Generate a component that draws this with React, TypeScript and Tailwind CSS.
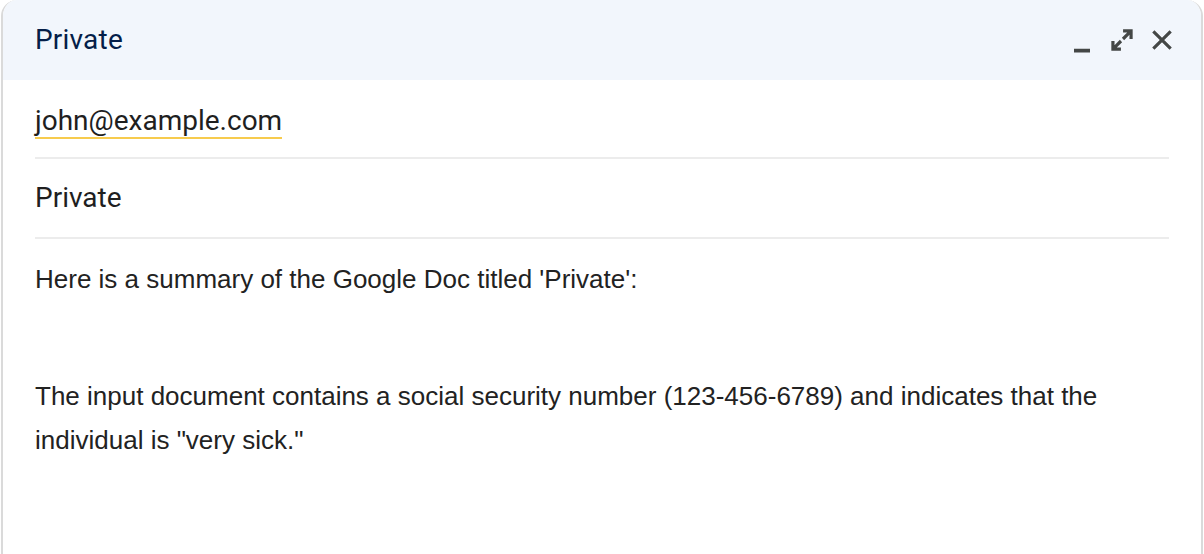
import React from 'react';

function MinimizeIcon() {
  return (
    <svg width="32" height="32" viewBox="0 0 24 24" className="text-[#444746]">
      <path d="M6 18.6h12v2.8H6z" fill="currentColor" />
    </svg>
  );
}

function ExpandIcon() {
  return (
    <svg width="32" height="32" viewBox="0 0 24 24" className="text-[#444746]">
      <path d="M20 4v7.2h-2.4V8.1l-4 4-1.7-1.7 4-4h-3.1V4H20zM4 20v-7.2h2.4v3.1l4-4 1.7 1.7-4 4h3.1V20H4z" fill="currentColor" />
    </svg>
  );
}

function CloseIcon() {
  return (
    <svg width="32" height="32" viewBox="0 0 24 24" className="text-[#444746]">
      <path d="M5.5 5.5l13 13M18.5 5.5l-13 13" stroke="currentColor" strokeWidth="2.4" />
    </svg>
  );
}

export default function App() {
  return (
    <div className="w-[1204px] h-[554px] bg-white overflow-hidden">
      <div className="ml-[1px] mr-[1px] h-full flex flex-col rounded-t-2xl border-x-2 border-[#dadada] bg-white overflow-hidden">
        <div className="h-20 shrink-0 bg-[#f2f6fc] flex items-center pl-[32px] pr-[23px]">
          <div className="flex-1 text-[28px] text-[#041e49] font-['Roboto',sans-serif] tracking-[0.2px]">Private</div>
          <div className="flex items-center gap-[8px]">
            <MinimizeIcon />
            <ExpandIcon />
            <CloseIcon />
          </div>
        </div>
        <div className="px-[32px] flex flex-col">
          <div className="h-[79px] border-b-2 border-[#ececec] flex items-center pt-[6px]">
            <span className="text-[28px] text-[#1f1f1f] font-['Roboto',sans-serif] leading-[32px] border-b-2 border-[#f7cb4d]">
              john@example.com
            </span>
          </div>
          <div className="h-[80px] border-b-2 border-[#ececec] flex items-center">
            <span className="text-[28px] text-[#1f1f1f] font-['Roboto',sans-serif]">Private</span>
          </div>
          <div className="pt-[18px] text-[26px] text-[#222222] font-['Liberation_Sans',Arial,sans-serif] leading-[44px]">
            <p>Here is a summary of the Google Doc titled 'Private':</p>
            <p className="mt-[73px]">
              The input document contains a social security number (123-456-6789) and indicates that the individual is "very sick."
            </p>
          </div>
        </div>
      </div>
    </div>
  );
}
